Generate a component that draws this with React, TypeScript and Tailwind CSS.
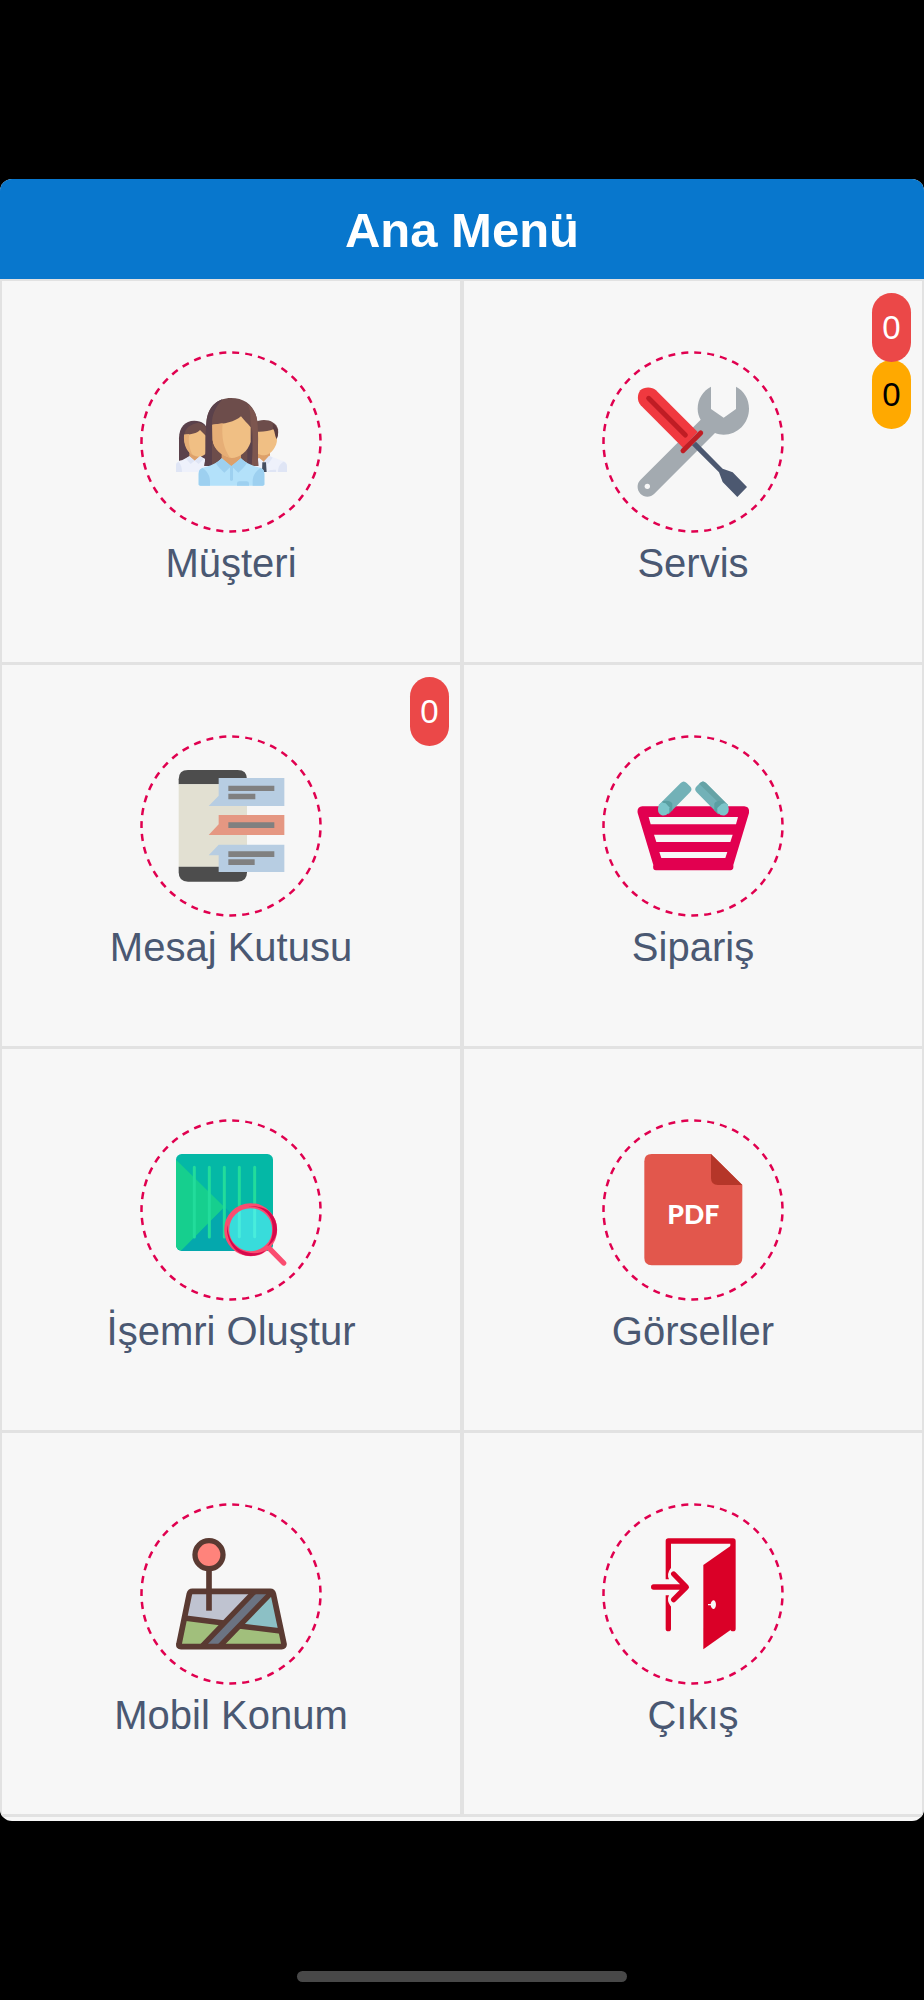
import React from 'react'

type Badge = { count: number; className: string }

type MenuItem = {
  label: string
  href: string
  icon: React.ReactNode
  badges?: Badge[]
}

const RED_BADGE = 'bg-[#eb4848] text-white z-10'
const ORANGE_BADGE = 'bg-[#ffa900] text-black'

function CustomerIcon() {
  return (
    <svg className="size-[112px]" viewBox="135 138 336 336" aria-hidden="true">
      {/* left woman */}
      <path d="M147 362V295C147 262 165 242 193 242C216 242 230 254 232 270V362Z" fill="#5a414b" />
      <path d="M163 290C163 260 185 252 206 248C222 252 232 262 232 275V292Z" fill="#6d4d4b" />
      <path d="M178 335H214V358L196 366L178 356Z" fill="#dda06a" />
      <path d="M162 284C184 284 200 280 210 270L232 292V335C222 350 204 354 190 346C174 336 162 318 162 284Z" fill="#f0bf84" />
      <path d="M162 284L178 282C174 302 178 328 188 345C170 334 160 314 162 284Z" fill="#e6ae76" />
      <path d="M138 396V376C138 366 146 364 156 361L178 349L194 362L210 349L232 360V396Z" fill="#eef1fb" />
      <path d="M138 396V376C138 370 141 367 146 366C154 374 156 386 156 396Z" fill="#dfe5f5" />
      <path d="M178 349L194 362L182 372L168 356ZM210 349L194 362L206 372L222 356Z" fill="#dfe5f5" />
      {/* right man */}
      <path d="M372 248C398 232 438 240 444 268C446 282 443 292 438 300L400 290L372 276Z" fill="#6d4d4b" />
      <path d="M428 250C446 262 448 284 438 300L430 288Z" fill="#5a3d40" />
      <path d="M380 330H420V360L400 372L380 358Z" fill="#dda06a" />
      <path d="M378 275C398 276 418 274 430 268C436 278 434 290 441 298C442 318 424 344 404 346C392 346 384 342 378 338Z" fill="#f0bf84" />
      <path d="M376 396V358L388 354L402 366L418 347L452 361C466 364 471 368 471 378V396Z" fill="#eef1fb" />
      <path d="M471 396V378C471 370 466 367 460 365C446 374 444 386 444 396ZM418 347L402 364L414 372L428 353Z" fill="#dfe5f5" />
      <path d="M414 396C414 391 420 389 438 389V396Z" fill="#dfe5f5" />
      <path d="M397 367H408L410 396H396Z" fill="#454e60" />
      {/* woman in front */}
      <path d="M223 378C230 340 224 300 229 250C232 200 262 174 303 174C348 174 380 200 383 255C386 300 382 340 385 378Z" fill="#6d4d4b" />
      <path d="M223 378C230 340 224 300 229 250C232 210 250 188 277 178C252 206 246 230 246 250V378Z" fill="#5a414b" />
      <path d="M354 194C374 208 382 230 383 255C386 300 382 340 385 378H366C360 330 376 300 364 262C358 240 366 220 354 194Z" fill="#7d564f" />
      <path d="M352 378V325C356 310 360 290 361 262C368 290 370 340 364 378Z" fill="#5a414b" />
      <path d="M275 335H333V368L304 382L275 368Z" fill="#dda06a" />
      <path d="M247 254C284 252 314 246 333 229C342 240 352 250 362 262V306C354 334 328 354 305 354C280 350 250 326 248 300Z" fill="#f0bf84" />
      <path d="M247 254L278 250C274 290 280 326 300 353C274 348 250 326 248 300Z" fill="#e6ae76" />
      <path d="M206 434V402C206 388 214 384 226 381C248 376 262 368 275 355L304 380L333 355C346 368 362 376 382 381C396 384 403 388 403 402V434Q403 437 398 437H211Q206 437 206 434Z" fill="#b3e1fa" />
      <path d="M206 434V402C206 391 211 386 218 384C234 396 240 410 240 424V437H211ZM403 434V402C403 391 398 386 391 384C374 396 368 410 368 424V437H398Z" fill="#9dd0f0" />
      <path d="M275 355L304 378L283 398C274 390 264 380 257 369C264 365 270 361 275 355ZM333 355L304 378L325 398C334 390 344 380 351 369C344 365 338 361 333 355Z" fill="#9dd0f0" />
      <path d="M300 378H309V418Q309 423 304 423Q300 423 300 418Z" fill="#9dd0f0" />
      <path d="M321 437V430Q321 424 328 424H350Q357 424 357 430V437Z" fill="#9dd0f0" />
    </svg>
  )
}

function ServiceIcon() {
  return (
    <svg className="size-[112px]" viewBox="141 138 336 336" aria-hidden="true">
      <path d="M363 140V207L401 233L438 207V140C462 152 477 177 477 206C477 249 443 284 401 284C392 284 383 282 375 279L193 461C181 473 163 473 151 461C140 449 140 431 151 420L332 239C326 229 323 218 323 206C323 177 339 152 363 140Z" fill="#a3aab0" />
      <circle cx="172" cy="439" r="8" fill="#f7f7f7" />
      <path d="M306 316L318 305L398 386L428 397L471 441L442 471L398 426L387 397Z" fill="#4c5870" />
      <path d="M151 151C163 140 186 140 198 151L323 276L279 323L152 196C141 184 141 163 151 151Z" fill="#f0393f" />
      <path d="M176 175L286 285" stroke="#c01d24" strokeWidth="15" strokeLinecap="round" />
      <path d="M279 332L332 279" stroke="#c01d24" strokeWidth="15" strokeLinecap="round" />
    </svg>
  )
}

function InboxIcon() {
  return (
    <svg className="size-[112px]" viewBox="135 135 336 336" aria-hidden="true">
      <path d="M146 178V163Q146 135 174 135H323Q351 135 351 163V178Z" fill="#4d4d4d" />
      <path d="M146 178H351V425H146Z" fill="#e2e0d2" />
      <path d="M146 425H351V442Q351 470 323 470H174Q146 470 146 442Z" fill="#4d4d4d" />
      <path d="M266 159H463V243H236L266 212Z" fill="#b7cde2" />
      <path d="M266 270H463V330H236L266 298Z" fill="#e59782" />
      <path d="M266 359H463V441H266V391H236Z" fill="#b7cde2" />
      <path d="M295 182H433V198H295ZM295 206H376V223H295ZM295 292H433V309H295ZM295 379H433V396H295ZM295 403H374V420H295Z" fill="#808080" />
    </svg>
  )
}

function BasketIcon() {
  return (
    <svg className="size-[112px]" viewBox="141 135 336 336" aria-hidden="true">
      <path
        d="M157 244H463Q480 246 477 264L430 420Q432 436 421 436H198Q187 436 190 420L143 264Q140 246 157 244ZM176 276L182 298H438L444 276ZM192 329L199 351H421L428 329ZM208 381L214 399H406L412 381Z"
        fill="#e20050"
        fillRule="evenodd"
      />
      <path d="M206 240L272 174Q281 165 290 174L300 184Q309 193 300 202L235 268Z" fill="#72b1b7" />
      <path d="M217 229Q240 224 247 236V256L235 268Z" fill="#5a9fa2" />
      <path d="M206 240Q214 230 227 235L238 247V262Q228 274 215 271Q199 264 206 240Z" fill="#7cc5ca" />
      <path d="M414 240L348 174Q339 165 330 174L320 184Q311 193 320 202L385 268Z" fill="#72b1b7" />
      <path d="M414 240L348 174Q339 165 330 174L328 177L403 250Z" fill="#66a3a6" />
      <path d="M403 229Q380 224 373 236V256L385 268Z" fill="#5a9fa2" />
      <path d="M414 240Q406 230 394 238L382 249V262Q392 274 405 271Q421 264 414 240Z" fill="#7cc5ca" />
    </svg>
  )
}

function WorkOrderIcon() {
  return (
    <svg className="size-[112px]" viewBox="135 132 336 336" aria-hidden="true">
      <rect x="138" y="132" width="291" height="291" rx="17" fill="#04b8a6" />
      <path d="M283 290L416 423H153Z" fill="#04a8ad" />
      <path d="M138 149L283 291L154 421Q138 420 138 406Z" fill="#16cf8e" />
      <path d="M193 172V381M238 172V381M283 172V381M328 172V381M374 172V381" stroke="#22dc9b" strokeWidth="9" strokeLinecap="round" />
      <path d="M412 409L461 459" stroke="#fa4d70" strokeWidth="16" strokeLinecap="round" />
      <circle cx="362" cy="359" r="67" fill="#38dcdb" />
      <path d="M328 304V380M374 294V380" stroke="#48eddc" strokeWidth="9" strokeLinecap="round" />
      <circle cx="362" cy="359" r="72" fill="none" stroke="#fa4d70" strokeWidth="15" />
      <path d="M355 291C395 284 428 315 428 352C429 378 422 397 411 409C428 400 442 380 441 355C439 322 418 300 401 295C386 289 370 286 355 291Z" fill="#d6094d" />
      <path d="M292 345C285 380 310 438 362 438C380 438 396 433 408 421C385 434 354 431 331 419C310 407 293 382 292 345Z" fill="#d6094d" />
    </svg>
  )
}

function PdfIcon() {
  return (
    <svg className="size-[112px]" viewBox="141 132 336 336" aria-hidden="true">
      <path d="M185 132H363L457 225V444Q457 466 435 466H185Q163 466 163 444V154Q163 132 185 132Z" fill="#e2574c" />
      <path d="M363 132L457 225H384Q363 225 363 204Z" fill="#b53629" />
      <text x="310" y="341" textAnchor="middle" fontSize="80" className="font-['Lato',sans-serif] font-black" fill="#fff">
        PDF
      </text>
    </svg>
  )
}

function LocationIcon() {
  return (
    <svg className="size-[112px]" viewBox="135 143 336 336" aria-hidden="true">
      <path d="M179 303H374L282 398L163 383Z" fill="#bfc3d0" />
      <path d="M163 383L282 398L222 469H146Z" fill="#a1bf7c" />
      <path d="M374 303H428L268 469H222Z" fill="#6b7382" />
      <path d="M428 303L452 422L334 407Z" fill="#8cc0c5" />
      <path d="M334 407L452 422L462 469H270Z" fill="#a1bf7c" />
      <path d="M163 383L281 398M328 407L452 422M374 303L215 469M428 303L268 469" fill="none" stroke="#5a3a32" strokeWidth="16" />
      <path d="M187 303H421Q428 303 430 311L462 461Q463 469 455 469H153Q145 469 147 461L178 311Q180 303 187 303Z" fill="none" stroke="#5a3a32" strokeWidth="17" />
      <path d="M237 240V361" stroke="#5a3a32" strokeWidth="17" />
      <circle cx="237" cy="193" r="42" fill="#ff837b" stroke="#5a3a32" strokeWidth="16" />
    </svg>
  )
}

function ExitIcon() {
  return (
    <svg className="size-[112px]" viewBox="141 143 336 336" aria-hidden="true">
      <path d="M235 415V152H429V415" fill="none" stroke="#da0027" strokeWidth="16" strokeLinecap="round" strokeLinejoin="round" />
      <path d="M340 224L430 161V413L340 477Z" fill="#da0027" />
      <path d="M354 341H362C364 332 368 329 372 330C380 334 380 352 372 356C368 357 364 354 362 345H354Z" fill="#f7f7f7" />
      {/* gap in the frame behind the arrow */}
      <path d="M224 267H237Q229 252 242 234L262 244V338L242 348Q229 330 237 315H224Z" fill="#f7f7f7" />
      <path d="M191 290H286M251 251L289 290L251 328" fill="none" stroke="#da0027" strokeWidth="16" strokeLinecap="round" strokeLinejoin="round" />
    </svg>
  )
}

const menuItems: MenuItem[] = [
  { label: 'Müşteri', href: '#musteri', icon: <CustomerIcon /> },
  {
    label: 'Servis',
    href: '#servis',
    icon: <ServiceIcon />,
    badges: [
      { count: 0, className: RED_BADGE },
      { count: 0, className: ORANGE_BADGE },
    ],
  },
  { label: 'Mesaj Kutusu', href: '#mesaj', icon: <InboxIcon />, badges: [{ count: 0, className: RED_BADGE }] },
  { label: 'Sipariş', href: '#siparis', icon: <BasketIcon /> },
  { label: 'İşemri Oluştur', href: '#isemri', icon: <WorkOrderIcon /> },
  { label: 'Görseller', href: '#gorseller', icon: <PdfIcon /> },
  { label: 'Mobil Konum', href: '#konum', icon: <LocationIcon /> },
  { label: 'Çıkış', href: '#cikis', icon: <ExitIcon /> },
]

function DashedCircle({ children }: { children: React.ReactNode }) {
  return (
    <div className="relative flex size-[182px] items-center justify-center">
      <svg className="absolute inset-0 size-full" viewBox="0 0 182 182" fill="none" aria-hidden="true">
        <circle
          cx="91"
          cy="91"
          r="89.5"
          stroke="#e0004f"
          strokeWidth="2.5"
          pathLength="360"
          strokeDasharray="4.5 3.872"
          strokeDashoffset="-2.9"
        />
      </svg>
      {children}
    </div>
  )
}

function MenuCell({ item }: { item: MenuItem }) {
  return (
    <a
      href={item.href}
      className="relative flex flex-col items-center gap-1.5 border-x-2 border-b-3 border-[#e2e2e2] pt-[70px] pb-[75px] text-[#4a5872]"
    >
      <DashedCircle>{item.icon}</DashedCircle>
      <span className="text-[40px] leading-[48px]">{item.label}</span>
      {item.badges && (
        <span className="absolute top-3 right-[11px] flex flex-col">
          {item.badges.map((badge, i) => (
            <span
              key={i}
              className={`-mb-0.5 flex h-[69px] w-[39px] items-center justify-center rounded-full text-[33px] ${badge.className}`}
            >
              {badge.count}
            </span>
          ))}
        </span>
      )}
    </a>
  )
}

export default function App() {
  return (
    <div className="flex min-h-screen flex-col bg-black pt-[179px] font-['Liberation_Sans',Arial,sans-serif]">
      <main className="overflow-hidden rounded-xl bg-[#f7f7f7] pb-1">
        <header className="flex h-[100px] items-center justify-center bg-[#0877cd]">
          <h1 className="pt-1 text-[49px] font-bold text-white">Ana Menü</h1>
        </header>
        <nav className="grid grid-cols-2 border-t-2 border-[#e2e2e2]">
          {menuItems.map((item) => (
            <MenuCell key={item.label} item={item} />
          ))}
        </nav>
      </main>
      <footer className="mt-auto flex justify-center pb-[18px]">
        <div className="h-[11px] w-[330px] rounded-full bg-[#484848]" />
      </footer>
    </div>
  )
}
